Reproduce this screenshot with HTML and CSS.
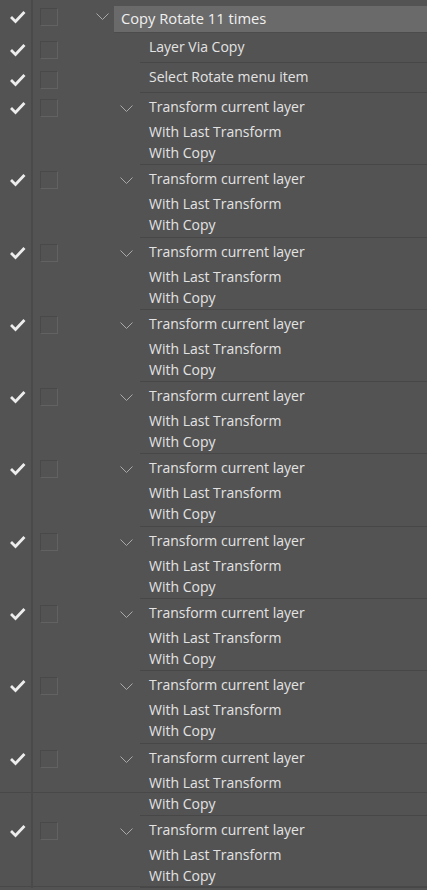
FILE: index.html
```html
<!DOCTYPE html>
<html>
<head>
<meta charset="utf-8">
<link rel="stylesheet" href="styles.css">
</head>
<body>
<div class="panel" id="panel">
  <div class="row top">
    <div class="c-check"><svg class="tick" width="16" height="14" viewBox="0 0 16 14"><path d="M2 7 L5.5 10.5 L13.5 2" /></svg></div>
    <div class="c-box"><span class="box"></span></div>
    <div class="c-tree lvl1">
      <svg class="chev" width="13" height="8" viewBox="0 0 13 8"><path d="M0.5 0.5 L6.5 6.5 L12.5 0.5"/></svg>
      <div class="label hl">Copy Rotate 11 times</div>
    </div>
  </div>
  <div class="row single">
    <div class="c-check"><svg class="tick" width="16" height="14" viewBox="0 0 16 14"><path d="M2 7 L5.5 10.5 L13.5 2" /></svg></div>
    <div class="c-box"><span class="box"></span></div>
    <div class="c-tree lvl2"><span class="chev-space"></span><div class="label">Layer Via Copy</div></div>
  </div>
  <div class="row single">
    <div class="c-check"><svg class="tick" width="16" height="14" viewBox="0 0 16 14"><path d="M2 7 L5.5 10.5 L13.5 2" /></svg></div>
    <div class="c-box"><span class="box"></span></div>
    <div class="c-tree lvl2"><span class="chev-space"></span><div class="label">Select Rotate menu item</div></div>
  </div>
</div>
<template id="grp">
  <div class="row group">
    <div class="c-check"><svg class="tick" width="16" height="14" viewBox="0 0 16 14"><path d="M2 7 L5.5 10.5 L13.5 2" /></svg></div>
    <div class="c-box"><span class="box"></span></div>
    <div class="c-tree lvl2">
      <span class="chev-space"><svg class="chev" width="13" height="8" viewBox="0 0 13 8"><path d="M0.5 0.5 L6.5 6.5 L12.5 0.5"/></svg></span>
      <div class="label">
        <div class="title">Transform current layer</div>
        <div class="sub">With Last Transform</div>
        <div class="sub">With Copy</div>
      </div>
    </div>
  </div>
</template>
<script>
  var p = document.getElementById('panel');
  var t = document.getElementById('grp');
  for (var i = 0; i < 11; i++) p.appendChild(t.content.cloneNode(true));
</script>
</body>
</html>
```
FILE: styles.css
```css
html, body {
  margin: 0;
  padding: 0;
  background: #535353;
}
body {
  width: 427px;
  height: 890px;
  overflow: hidden;
  font-family: "Open Sans", "Noto Sans", sans-serif;
  font-size: 14px;
  color: #e3e3e3;
}
.panel {
  display: flex;
  flex-direction: column;
  min-height: 890px;
  background-image:
    linear-gradient(#484848, #484848),
    linear-gradient(#484848, #484848);
  background-repeat: no-repeat;
  background-size: 100% 1px, 100% 1px;
  background-position: 0 792px, 0 886px;
}
.row {
  display: flex;
  align-items: stretch;
  flex: none;
}
.c-check {
  width: 31px;
  border-right: 2px solid #4a4a4a;
  display: flex;
  justify-content: center;
  align-items: flex-start;
  flex: none;
}
.tick {
  margin-top: 11px;
  margin-left: 4px;
}
.tick path {
  fill: none;
  stroke: #ededed;
  stroke-width: 2.8;
  stroke-linecap: square;
}
.c-box {
  width: 25px;
  flex: none;
  padding-left: 7px;
  box-sizing: border-box;
}
.box {
  display: block;
  width: 18px;
  height: 18px;
  box-sizing: border-box;
  border: 1px solid;
  border-color: #494949 #626262 #626262 #494949;
  margin-top: 8px;
}
.c-tree {
  flex: 1;
  display: flex;
  align-items: flex-start;
}
.chev path {
  fill: none;
  stroke: #a9a9a9;
  stroke-width: 1;
}

/* top row */
.row.top { height: 33px; }
.lvl1 { padding-left: 38px; }
.lvl1 .chev { margin-top: 13px; flex: none; }
.lvl1 .label.hl {
  margin-left: 5px;
  margin-top: 6px;
  height: 26px;
  line-height: 24px;
  flex: 1;
  background: #6a6a6a;
  padding-left: 7px;
  color: #f0f0f0;
  font-size: 14.7px;
  border-bottom: 1px solid #4c4c4c;
}

/* nested rows */
.lvl2 { padding-left: 62px; height: 100%; }
.chev-space {
  width: 20px;
  flex: none;
  display: flex;
}
.chev-space .chev { margin-top: 12px; }
.lvl2 .label {
  flex: 1;
  height: 100%;
  box-sizing: border-box;
  padding-left: 9px;
  border-bottom: 1px solid #474747;
}
.row.single { height: 30px; }
.row.single .label { line-height: 28px; }
.row.group { height: 72.3px; }
.row.group .box { margin-top: 6px; }
.row.group .tick { margin-top: 9px; }
.title { line-height: 27px; height: 29px; }
.sub { line-height: 21px; height: 21px; }
.title + .sub { margin-top: -1px; }
```
